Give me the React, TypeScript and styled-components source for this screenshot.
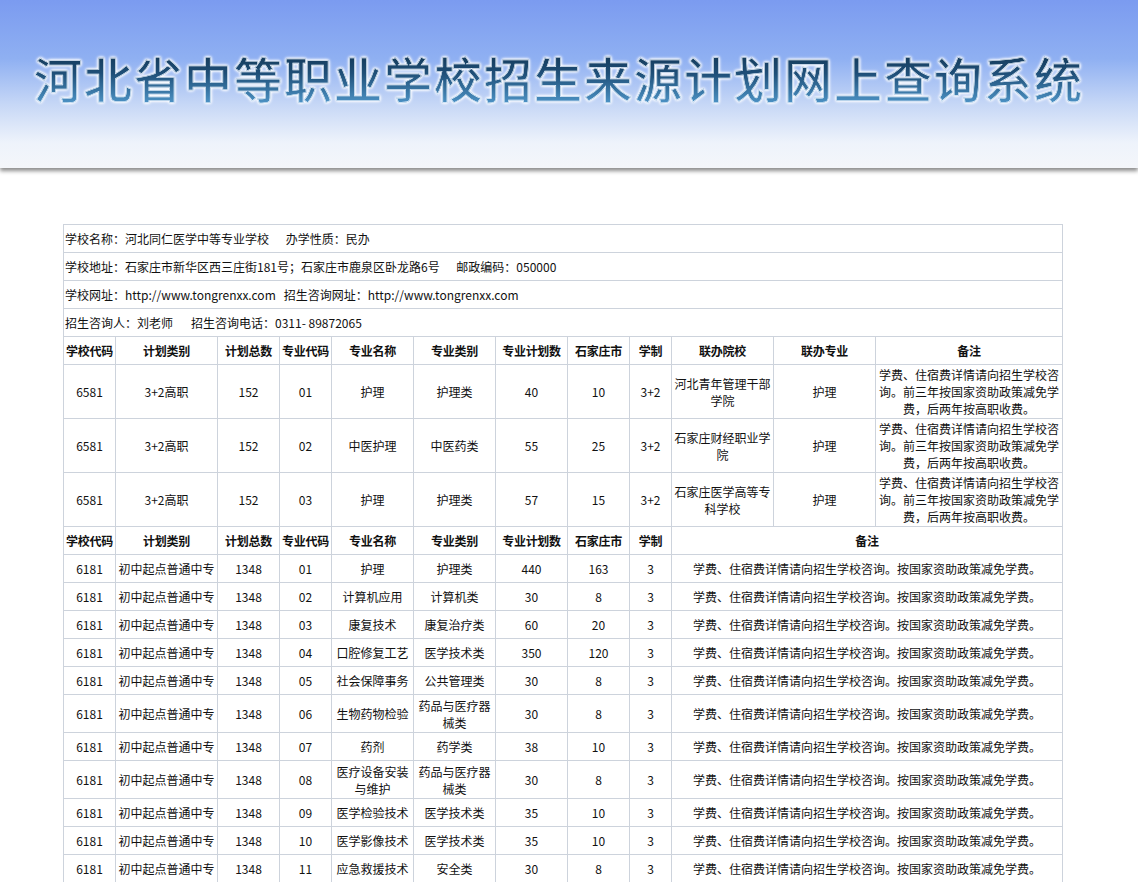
import React from "react";
import styled, { createGlobalStyle } from "styled-components";

const G = createGlobalStyle`
  body { margin: 0; background: #fff; font-family: "Microsoft YaHei", "Noto Sans CJK SC", sans-serif; }
`;

const Header = styled.div`
  height: 168px;
  background: linear-gradient(180deg, #7b9bf0 0%, #8fb0f2 35%, #c6d7f6 62%, #eef3fb 85%, #f4f6fa 100%);
  box-shadow: 0 3px 4px rgba(0,0,0,0.45);
  display: flex;
  align-items: center;
  padding-left: 34px;
`;

const Title = styled.h1`
  margin: 0 0 14px;
  font-family: "Noto Sans CJK SC", sans-serif;
  font-weight: 500;
  font-size: 48px;
  letter-spacing: 2px;
  background: linear-gradient(180deg, #0d2b45 0%, #1f4f78 45%, #5aa7dc 100%);
  -webkit-background-clip: text;
  background-clip: text;
  color: transparent;
  -webkit-text-stroke: 0.6px #eaf3ff;
  filter: drop-shadow(0 0 1.5px #fff) drop-shadow(0 0 1px #fff);
`;

const Wrap = styled.div`
  padding: 56px 0 0 63px;
`;

const Table = styled.table`
  width: 1000px;
  border-collapse: collapse;
  table-layout: fixed;
  font-family: "Noto Sans CJK SC", sans-serif;
  font-size: 12px;
  color: #111;
  td, th { border: 1px solid #cdd3dc; text-align: center; padding: 0 2px; line-height: 17px; }
`;

const Info = styled.td`
  && { text-align: left; height: 27px; padding: 0 1px; }
  span { margin-right: 14px; }
`;

const Th = styled.th`
  height: 27px;
  font-weight: bold;
  white-space: nowrap;
  && { padding: 0; letter-spacing: -0.3px; }
`;

const Td = styled.td<{ $h?: number }>`
  height: ${(p) => p.$h ?? 27}px;
`;

const widths = [52, 102, 62, 52, 82, 82, 72, 62, 42, 102, 102, 187];

const heads1 = ["学校代码", "计划类别", "计划总数", "专业代码", "专业名称", "专业类别", "专业计划数", "石家庄市", "学制", "联办院校", "联办专业", "备注"];

const note1 = "学费、住宿费详情请向招生学校咨询。前三年按国家资助政策减免学费，后两年按高职收费。";
const top = [
  ["6581", "3+2高职", "152", "01", "护理", "护理类", "40", "10", "3+2", "河北青年管理干部学院", "护理"],
  ["6581", "3+2高职", "152", "02", "中医护理", "中医药类", "55", "25", "3+2", "石家庄财经职业学院", "护理"],
  ["6581", "3+2高职", "152", "03", "护理", "护理类", "57", "15", "3+2", "石家庄医学高等专科学校", "护理"],
];
const note2 = "学费、住宿费详情请向招生学校咨询。按国家资助政策减免学费。";
const bottom: [string, string, string, string, number][] = [
  ["01", "护理", "护理类", "440", 163],
  ["02", "计算机应用", "计算机类", "30", 8],
  ["03", "康复技术", "康复治疗类", "60", 20],
  ["04", "口腔修复工艺", "医学技术类", "350", 120],
  ["05", "社会保障事务", "公共管理类", "30", 8],
  ["06", "生物药物检验", "药品与医疗器械类", "30", 8],
  ["07", "药剂", "药学类", "38", 10],
  ["08", "医疗设备安装与维护", "药品与医疗器械类", "30", 8],
  ["09", "医学检验技术", "医学技术类", "35", 10],
  ["10", "医学影像技术", "医学技术类", "35", 10],
  ["11", "应急救援技术", "安全类", "30", 8],
];

export default function App() {
  return (
    <>
      <G />
      <Header>
        <Title>河北省中等职业学校招生来源计划网上查询系统</Title>
      </Header>
      <Wrap>
        <Table>
          <colgroup>
            {widths.map((w, i) => <col key={i} style={{ width: w }} />)}
          </colgroup>
          <tbody>
            <tr><Info colSpan={12}><span>学校名称：河北同仁医学中等专业学校</span> 办学性质：民办</Info></tr>
            <tr><Info colSpan={12}><span>学校地址：石家庄市新华区西三庄街181号；石家庄市鹿泉区卧龙路6号</span> 邮政编码：050000</Info></tr>
            <tr><Info colSpan={12}><span style={{ marginRight: 8 }}>学校网址：http://www.tongrenxx.com</span>招生咨询网址：http://www.tongrenxx.com</Info></tr>
            <tr><Info colSpan={12}><span style={{ marginRight: 18 }}>招生咨询人：刘老师</span>招生咨询电话：0311- 89872065</Info></tr>
            <tr>{heads1.map((h) => <Th key={h}>{h}</Th>)}</tr>
            {top.map((r, i) => (
              <tr key={i}>
                {r.map((c, j) => <Td key={j} $h={53}>{c}</Td>)}
                <Td $h={53}>{note1}</Td>
              </tr>
            ))}
            <tr>
              {heads1.slice(0, 9).map((h) => <Th key={h}>{h}</Th>)}
              <Th colSpan={3}>备注</Th>
            </tr>
            {bottom.map((r) => {
              const h = r[1].length > 6 || r[2].length > 6 ? 37 : 27;
              return (
                <tr key={r[0]}>
                  <Td $h={h}>6181</Td>
                  <Td $h={h}>初中起点普通中专</Td>
                  <Td $h={h}>1348</Td>
                  <Td $h={h}>{r[0]}</Td>
                  <Td $h={h}>{r[1]}</Td>
                  <Td $h={h}>{r[2]}</Td>
                  <Td $h={h}>{r[3]}</Td>
                  <Td $h={h}>{r[4]}</Td>
                  <Td $h={h}>3</Td>
                  <Td $h={h} colSpan={3}>{note2}</Td>
                </tr>
              );
            })}
          </tbody>
        </Table>
      </Wrap>
    </>
  );
}
